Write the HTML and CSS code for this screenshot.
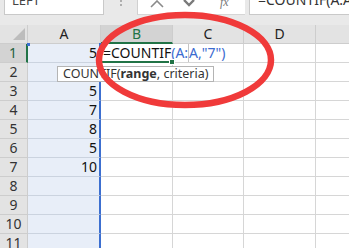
FILE: index.html
```html
<!DOCTYPE html>
<html>
<head>
<meta charset="utf-8">
<link rel="stylesheet" href="styles.css">
</head>
<body>
<div class="app">
  <div class="topbar">
    <div class="namebox"><span class="cut">LEFT</span></div>
    <div class="dots">
      <svg width="4" height="8" viewBox="0 0 4 8"><circle cx="2" cy="1" r="1" fill="#9a9a9a"/><circle cx="2" cy="5" r="1" fill="#9a9a9a"/></svg>
    </div>
    <div class="tools">
      <svg width="107" height="14" viewBox="0 0 107 14">
        <polyline points="13,7 19,1 25,7" fill="none" stroke="#8a8a8a" stroke-width="1.6"/>
        <polyline points="46,0 51,5 56,0" fill="none" stroke="#7a7a7a" stroke-width="2.4"/>
        <text x="82" y="6" class="fx">fx</text>
      </svg>
    </div>
    <div class="spacer"></div>
    <div class="fbar"><span class="cut">=COUNTIF(A:A,"7")</span></div>
  </div>

  <div class="grid">
    <div class="c h corner"><svg width="27" height="18" viewBox="0 0 27 18"><polygon points="13,15 25,15 25,3" fill="#bdbdbd"/></svg></div>
    <div class="c h">A</div>
    <div class="c h sel">B</div>
    <div class="c h">C</div>
    <div class="c h">D</div>
    <div class="c h last"></div>

    <div class="c rh rsel">1</div>
    <div class="c a a1">5</div>
    <div class="c b1"><span class="fn">=COUNTIF</span><span class="ref">(A:</span><span class="caret"></span><span class="ref">A,"7")</span></div>
    <div class="c"></div><div class="c"></div><div class="c last"></div>

    <div class="c rh">2</div><div class="c a"></div><div class="c"></div><div class="c"></div><div class="c"></div><div class="c last"></div>
    <div class="c rh">3</div><div class="c a">5</div><div class="c"></div><div class="c"></div><div class="c"></div><div class="c last"></div>
    <div class="c rh">4</div><div class="c a">7</div><div class="c"></div><div class="c"></div><div class="c"></div><div class="c last"></div>
    <div class="c rh">5</div><div class="c a">8</div><div class="c"></div><div class="c"></div><div class="c"></div><div class="c last"></div>
    <div class="c rh">6</div><div class="c a">5</div><div class="c"></div><div class="c"></div><div class="c"></div><div class="c last"></div>
    <div class="c rh">7</div><div class="c a">10</div><div class="c"></div><div class="c"></div><div class="c"></div><div class="c last"></div>
    <div class="c rh">8</div><div class="c a"></div><div class="c"></div><div class="c"></div><div class="c"></div><div class="c last"></div>
    <div class="c rh">9</div><div class="c a"></div><div class="c"></div><div class="c"></div><div class="c"></div><div class="c last"></div>
    <div class="c rh">10</div><div class="c a"></div><div class="c"></div><div class="c"></div><div class="c"></div><div class="c last"></div>
    <div class="c rh">11</div><div class="c a"></div><div class="c"></div><div class="c"></div><div class="c"></div><div class="c last"></div>
  </div>

  <div class="tip">COUNTIF(<b>range</b>, criteria)</div>

  <svg class="mark" width="349" height="248" viewBox="0 0 349 248">
    <ellipse cx="185" cy="60" rx="86" ry="45" fill="none" stroke="#f03a3a" stroke-width="6.5"/>
  </svg>
</div>
</body>
</html>
```

FILE: styles.css
```css
html, body {
  margin: 0;
  padding: 0;
  background: #fff;
  overflow: hidden;
}

body {
  font-family: "Noto Sans", "Open Sans", sans-serif;
}

.app {
  position: relative;
  width: 349px;
  height: 248px;
  overflow: hidden;
  background: #e9e9e9;
}

/* top bar */
.topbar {
  display: flex;
  height: 15px;
}

.cut {
  display: block;
  line-height: 12px;
  margin-top: -6px;
  white-space: nowrap;
}

.namebox {
  margin-left: 4px;
  width: 100px;
  box-sizing: border-box;
  background: #fff;
  border: 1px solid #c9c9c9;
  border-top: 0;
  padding-left: 7px;
  font-size: 13px;
  color: #444;
  overflow: hidden;
}

.dots {
  width: 33px;
  display: flex;
  justify-content: center;
  align-items: flex-start;
}

.tools {
  width: 108px;
  box-sizing: border-box;
  background: #fff;
  border-left: 1px solid #d0d0d0;
  border-bottom: 1px solid #d6d6d6;
}

.tools svg {
  display: block;
}

.fx {
  font-family: "Liberation Serif", serif;
  font-style: italic;
  font-size: 12px;
  fill: #777;
}

.spacer {
  width: 4px;
}

.fbar {
  flex: 1;
  box-sizing: border-box;
  background: #fff;
  border-left: 1px solid #c9c9c9;
  border-bottom: 1px solid #c9c9c9;
  padding-left: 8px;
  font-size: 14px;
  color: #333;
  overflow: hidden;
}

/* grid */
.grid {
  display: grid;
  grid-template-columns: 28px 73px 72px 71px 72px 1fr;
  grid-auto-rows: 19px;
  margin-top: 10px;
  background: #fff;
  font-size: 14px;
  line-height: 18px;
  color: #111;
}

.c {
  box-sizing: border-box;
  border-right: 1px solid #d6d6d6;
  border-bottom: 1px solid #d6d6d6;
  white-space: nowrap;
}

.c.last {
  border-right: 0;
}

.h {
  background: #e3e3e3;
  border-color: #cdcdcd;
  text-align: center;
  color: #222;
}

.h.sel {
  background: #d3d3d3;
  color: #217346;
  border-bottom: 2px solid #217346;
  line-height: 17px;
}

.corner svg {
  display: block;
}

.rh {
  background: #e3e3e3;
  border-color: #cdcdcd;
  text-align: center;
  color: #333;
}

.rh.rsel {
  background: #d3d3d3;
  color: #26613f;
  border-right: 2px solid #217346;
}

.a {
  background: #e8eef8;
  border-bottom-color: #cbd3df;
  border-right: 2px solid #3c6fd0;
  text-align: right;
  padding-right: 2px;
}

.a1 {
  position: relative;
}

.a1::before,
.a1::after {
  content: "";
  position: absolute;
  top: -1px;
  width: 3px;
  height: 3px;
  background: #3c6fd0;
}

.a1::before {
  left: -1px;
}

.a1::after {
  right: -3px;
}

.b1 {
  position: relative;
  z-index: 1;
  border-right-color: transparent;
  border-bottom: 2px solid #217346;
  padding-left: 2px;
  line-height: 18px;
  overflow: visible;
}

.b1::after {
  content: "";
  position: absolute;
  right: -3px;
  bottom: -4px;
  width: 4px;
  height: 4px;
  background: #217346;
  border: 1px solid #fff;
}

.fn {
  color: #111;
}

.ref {
  color: #3b6bd0;
}

.caret {
  display: inline-block;
  width: 1px;
  height: 18px;
  background: #c4c4c4;
  vertical-align: top;
}

/* tooltip */
.tip {
  position: absolute;
  left: 57px;
  top: 66px;
  width: 157px;
  height: 16px;
  box-sizing: border-box;
  background: #fff;
  border: 1px solid #b4b4b4;
  padding-left: 5px;
  font-size: 12.5px;
  line-height: 13px;
  color: #333;
  white-space: nowrap;
  z-index: 4;
}

.tip b {
  font-weight: 700;
}

.mark {
  position: absolute;
  left: 0;
  top: 0;
  z-index: 5;
  pointer-events: none;
}
```
